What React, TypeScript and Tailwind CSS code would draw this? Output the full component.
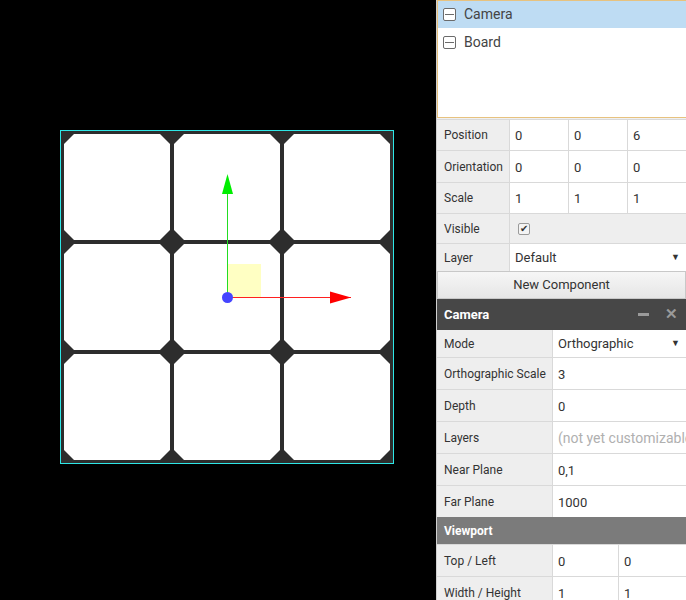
import React from 'react';

const font = { fontFamily: 'Roboto, "Noto Sans", sans-serif' };

function Tile({ x, y }: { x: number; y: number }) {
  const w = 106;
  const c = 10;
  const pts = [
    [x + c, y],
    [x + w - c, y],
    [x + w, y + c],
    [x + w, y + w - c],
    [x + w - c, y + w],
    [x + c, y + w],
    [x, y + w - c],
    [x, y + c],
  ]
    .map((p) => p.join(','))
    .join(' ');
  return <polygon points={pts} fill="#ffffff" />;
}

function Scene() {
  const cols = [64, 174, 284];
  const rows = [134, 244, 354];
  return (
    <svg width="436" height="600" className="block">
      <rect x="0" y="0" width="436" height="600" fill="#000" />
      <rect x="60.5" y="130.5" width="333" height="333" fill="#2d2d2d" stroke="#2ee6e6" strokeWidth="1" />
      {rows.map((ry) => cols.map((cx) => <Tile key={cx + '-' + ry} x={cx} y={ry} />))}
      {/* gizmo */}
      <rect x="228" y="264" width="33" height="33" fill="#ffffb8" opacity="0.85" />
      <line x1="227.5" y1="297" x2="227.5" y2="192" stroke="#22dd22" strokeWidth="1" />
      <polygon points="227.5,174 233,194 222,194" fill="#00ee00" />
      <line x1="227" y1="297.5" x2="351" y2="297.5" stroke="#ff2020" strokeWidth="1" />
      <polygon points="351,297.5 330,291.5 330,303.5" fill="#ff0000" />
      <circle cx="227.5" cy="297.5" r="5.5" fill="#4545ff" />
    </svg>
  );
}

function MinusBox() {
  return (
    <span className="flex h-[13px] w-[13px] items-center justify-center rounded-[2px] border border-[#6b6b6b] bg-white">
      <span className="h-[1px] w-[9px] bg-[#6b6b6b]" />
    </span>
  );
}

function Label({ children, className = '' }: { children: React.ReactNode; className?: string }) {
  return (
    <div className={'flex items-center bg-[#eeeeee] pl-[7px] text-[12px] text-[#333] ' + className}>{children}</div>
  );
}

function Val({ children, className = '' }: { children?: React.ReactNode; className?: string }) {
  return (
    <div className={'flex items-center bg-white pl-[5px] pt-[2px] text-[13px] text-[#333] ' + className}>{children}</div>
  );
}

export default function App() {
  return (
    <div className="flex h-[600px] w-[686px] overflow-hidden bg-black" style={font}>
      <div className="w-[436px] shrink-0">
        <Scene />
      </div>
      <div className="w-[250px] shrink-0 border-l border-[#cfcfcf] bg-[#f0f0f0]">
        <div className="h-[118px] w-[252px] border border-[#e7c27f] bg-white">
          <div className="flex h-[27px] items-center gap-[8px] bg-[#bedcf3] pl-[5px] text-[14px] text-[#444]">
            <MinusBox />
            <span>Camera</span>
          </div>
          <div className="flex h-[28px] items-center gap-[8px] pl-[5px] text-[14px] text-[#444]">
            <MinusBox />
            <span>Board</span>
          </div>
        </div>

        <div className="mt-[1px] grid grid-cols-[72px_58px_58px_58px] gap-[1px] bg-[#d9d9d9] pt-[1px]">
          <Label className="h-[30px]">Position</Label>
          <Val className="h-[30px]">0</Val>
          <Val className="h-[30px]">0</Val>
          <Val className="h-[30px]">6</Val>
          <Label className="h-[31px]">Orientation</Label>
          <Val className="h-[31px]">0</Val>
          <Val className="h-[31px]">0</Val>
          <Val className="h-[31px]">0</Val>
          <Label className="h-[30px]">Scale</Label>
          <Val className="h-[30px]">1</Val>
          <Val className="h-[30px]">1</Val>
          <Val className="h-[30px]">1</Val>
        </div>
        <div className="grid grid-cols-[72px_177px] gap-[1px] bg-[#d9d9d9] pt-[1px]">
          <Label className="h-[29px]">Visible</Label>
          <div className="flex h-[29px] items-center bg-[#eeeeee] pl-[8px]">
            <span className="flex h-[12px] w-[12px] items-center justify-center rounded-[2px] border border-[#9a9a9a] bg-[#f4f4f4] text-[10px] leading-none text-[#333]">
              ✔
            </span>
          </div>
          <Label className="h-[27px]">Layer</Label>
          <div className="flex h-[27px] items-center justify-between bg-white pl-[5px] pr-[7px] text-[13px] text-[#333]">
            <span>Default</span>
            <span className="text-[9px]">▼</span>
          </div>
        </div>
        <div className="flex h-[28px] items-center justify-center border border-[#c8c8c8] bg-gradient-to-b from-[#f6f6f6] to-[#e6e6e6] text-[13px] text-[#333]">
          New Component
        </div>

        <div className="flex h-[31px] items-center justify-between bg-[#474747] pl-[7px] pr-[8px] text-[13px] font-bold text-white">
          <span>Camera</span>
          <span className="flex items-center gap-[16px] text-[#9a9a9a]">
            <span className="h-[3px] w-[11px] bg-[#9a9a9a]" />
            <span className="text-[15px] leading-none">✕</span>
          </span>
        </div>
        <div className="grid grid-cols-[115px_134px] gap-[1px] bg-[#d9d9d9]">
          <Label className="h-[27px]">Mode</Label>
          <div className="flex h-[27px] items-center justify-between bg-white pl-[5px] pr-[7px] text-[13px] text-[#333]">
            <span>Orthographic</span>
            <span className="text-[9px]">▼</span>
          </div>
          <Label className="h-[31px]">Orthographic Scale</Label>
          <Val className="h-[31px]">3</Val>
          <Label className="h-[31px]">Depth</Label>
          <Val className="h-[31px]">0</Val>
          <Label className="h-[31px]">Layers</Label>
          <Val className="h-[31px] overflow-hidden whitespace-nowrap bg-[#eeede8] text-[14px] text-[#b0b0b0]">(not yet customizable)</Val>
          <Label className="h-[31px]">Near Plane</Label>
          <Val className="h-[31px]">0,1</Val>
          <Label className="h-[31px]">Far Plane</Label>
          <Val className="h-[31px]">1000</Val>
        </div>
        <div className="flex h-[27px] items-center bg-[#7b7b7b] pl-[7px] text-[12px] font-bold text-white">Viewport</div>
        <div className="grid grid-cols-[115px_65px_68px] gap-[1px] bg-[#d9d9d9] pt-[1px]">
          <Label className="h-[31px]">Top / Left</Label>
          <Val className="h-[31px]">0</Val>
          <Val className="h-[31px]">0</Val>
          <Label className="h-[31px]">Width / Height</Label>
          <Val className="h-[31px]">1</Val>
          <Val className="h-[31px]">1</Val>
        </div>
      </div>
    </div>
  );
}
